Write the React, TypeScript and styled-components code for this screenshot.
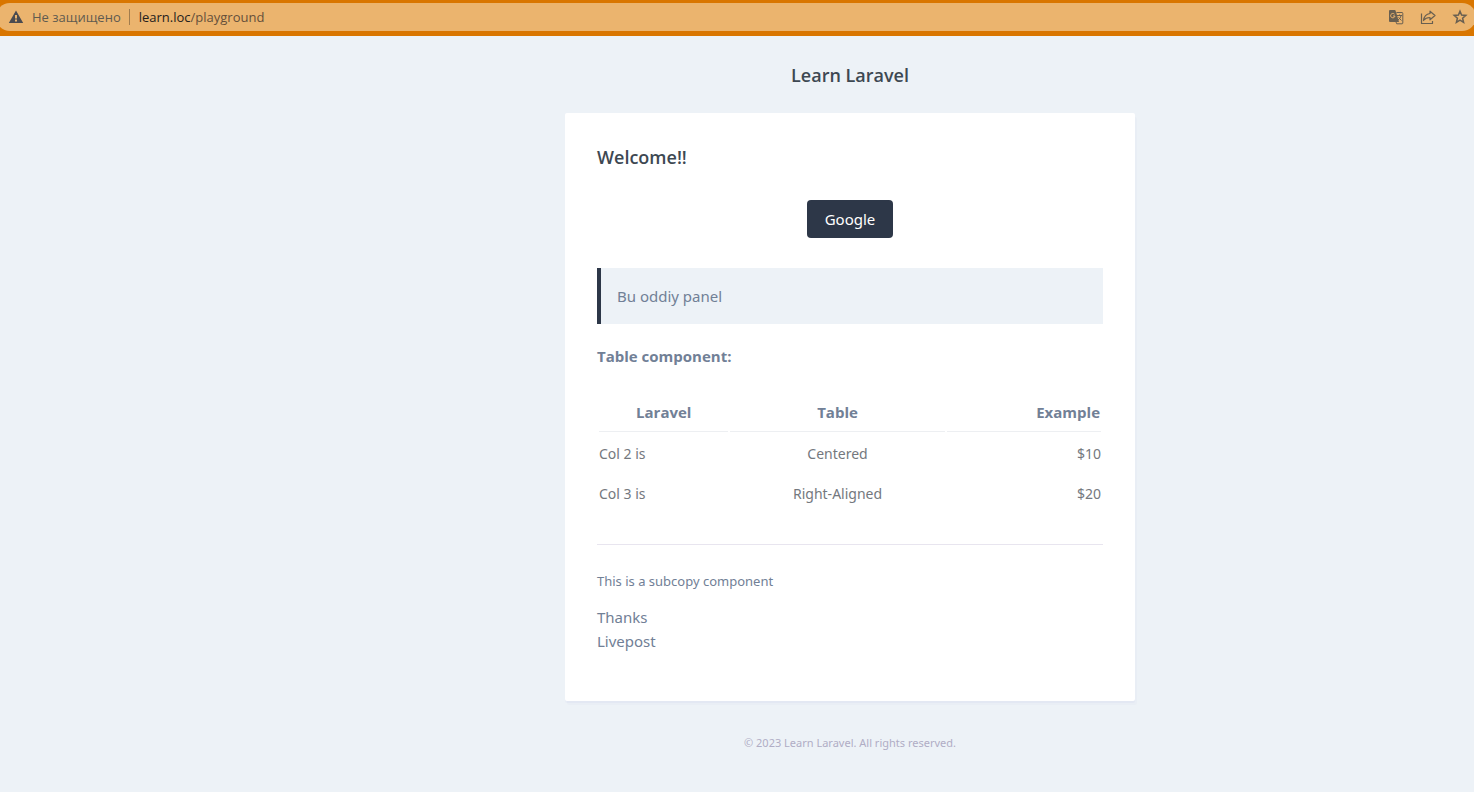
import React from "react";
import styled, { createGlobalStyle } from "styled-components";

const GlobalStyle = createGlobalStyle`
  * { box-sizing: border-box; }
  body {
    margin: 0;
    background: #edf2f7;
    color: #718096;
    font-family: "Noto Sans", "Open Sans", sans-serif;
    font-size: 15px;
    line-height: 24px;
  }
`;

const BrowserBar = styled.header`
  height: 36px;
  padding: 3px 0 5px;
  background: #d97600;
`;

const AddressBar = styled.div`
  display: flex;
  align-items: center;
  justify-content: space-between;
  height: 28px;
  margin: 0 -2px 0 -4px;
  padding: 0 8px 0 12px;
  border-radius: 14px;
  background: #ebb46e;
`;

const BarShell = styled.div`
  overflow: hidden;
`;

const AddressGroup = styled.div`
  display: flex;
  align-items: center;
  font-family: "Open Sans", "Noto Sans", sans-serif;
  font-size: 13px;
  line-height: 20px;
`;

const SecurityButton = styled.button`
  display: flex;
  align-items: center;
  gap: 8px;
  padding: 0;
  border: 0;
  background: none;
  color: #5f5b50;
  font: inherit;
`;

const Divider = styled.span`
  width: 1px;
  height: 16px;
  margin: 0 9px 0 8px;
  background: #a17c4d;
`;

const Address = styled.a`
  color: #654f3a;
  text-decoration: none;
`;

const Host = styled.span`
  color: #24201c;
`;

const Tools = styled.div`
  display: flex;
  gap: 16px;
`;

const ToolButton = styled.button`
  display: flex;
  padding: 0;
  border: 0;
  background: none;
  color: #695f50;
`;

const Mail = styled.div`
  display: flex;
  flex-direction: column;
  align-items: center;
  padding-left: 226px;
`;

const MailTitle = styled.a`
  padding: 27px 0 26px;
  color: #3d4852;
  font-family: "Open Sans", "Noto Sans", sans-serif;
  font-size: 18px;
  font-weight: 600;
  text-decoration: none;
`;

const Card = styled.main`
  width: 100%;
  max-width: 570px;
  padding: 32px;
  border-radius: 2px;
  background: #fff;
  box-shadow: 0 2px 0 rgba(0, 0, 150, 0.025), 2px 4px 0 rgba(0, 0, 150, 0.015);
`;

const Heading = styled.h1`
  margin: 0;
  color: #3d4852;
  font-family: "Open Sans", "Noto Sans", sans-serif;
  font-size: 18px;
  font-weight: 600;
  line-height: 24px;
`;

const Action = styled.div`
  display: flex;
  justify-content: center;
  margin: 31px 0 30px;
`;

const ActionLink = styled.a`
  padding: 7px 18px;
  border-radius: 4px;
  background: #2d3748;
  color: #fff;
  text-decoration: none;
`;

const Panel = styled.div`
  padding: 16px;
  border-left: 4px solid #2d3748;
  background: #edf2f7;
`;

const TableHeading = styled.h2`
  margin: 20px 0 28px;
  font-family: "Open Sans", "Noto Sans", sans-serif;
  font-size: 15px;
  line-height: 24px;
`;

const DataTable = styled.table`
  width: 100%;
  table-layout: fixed;
  border-spacing: 2px;
`;

type CellProps = { $align: "left" | "center" | "right"; $width?: string };

const HeadCell = styled.th<CellProps>`
  width: ${(p) => p.$width};
  padding: 2px 1px 7px;
  border-bottom: 1px solid #edeff2;
  font-family: "Open Sans", "Noto Sans", sans-serif;
  text-align: ${(p) => p.$align};
`;

const Cell = styled.td<CellProps>`
  padding: 11px 0 9px;
  color: #74787e;
  font-size: 14px;
  line-height: 18px;
  text-align: ${(p) => p.$align};
`;

const Subcopy = styled.p`
  margin: 30px 0 13px;
  padding-top: 26px;
  border-top: 1px solid #e8e5ef;
  font-size: 13px;
  line-height: 21px;
`;

const SignOff = styled.p`
  margin: 0 0 16px;
`;

const Footer = styled.footer`
  padding: 33px 32px 32px;
  color: #b0adc5;
  font-size: 11px;
  line-height: 18px;
`;

const rows = [
  ["Col 2 is", "Centered", "$10"],
  ["Col 3 is", "Right-Aligned", "$20"],
];

function WarningIcon() {
  return (
    <svg width="16" height="16" viewBox="0 0 16 16" aria-hidden="true">
      <path fill="#4a4b50" fillRule="evenodd" d="M8 1.500 15.200 14H.8ZM7 6v3.500h2V6ZM7 10.500v2h2v-2Z" />
    </svg>
  );
}

function TranslateIcon() {
  return (
    <svg width="16" height="16" viewBox="0 0 16 16" fill="none" stroke="currentColor" aria-hidden="true">
      <path fill="currentColor" stroke="none" d="M2 1h5.200l1 2.500L11 13H2a1 1 0 0 1-1-1V2a1 1 0 0 1 1-1Z" />
      <path stroke="#ebb46e" d="M6.500 5.200A2.200 2.200 0 1 0 7 7H5" />
      <path d="M8.500 3.500H14a.8.8 0 0 1 .8.8V14a.8.8 0 0 1-.8.8H8.700L8 13M9 6.500h5M11.500 5.500v1M13 6.500c-.3 2-1.500 3.500-3 4.500M10.500 8.500l3 3" />
    </svg>
  );
}

function ShareIcon() {
  return (
    <svg width="16" height="16" viewBox="0 0 16 16" fill="none" stroke="currentColor" strokeWidth="1.200" strokeLinejoin="round" aria-hidden="true">
      <path d="M1.500 4.500v10h11V12" />
      <path d="M10 2.200l5 4.300-5 4.300V8.500C7 8.500 5 9.500 3.500 11.500 4 7.500 6 5 10 4.500Z" />
    </svg>
  );
}

function StarIcon() {
  return (
    <svg width="16" height="16" viewBox="0 0 16 16" fill="none" stroke="currentColor" strokeWidth="1.500" aria-hidden="true">
      <path d="m8 2.200 1.600 3.900 4.200.3-3.200 2.800 1 4.200L8 11.200l-3.600 2.200 1-4.200-3.200-2.800 4.200-.3Z" />
    </svg>
  );
}

export default function App() {
  return (
    <>
      <GlobalStyle />
      <BarShell>
        <BrowserBar>
          <AddressBar>
            <AddressGroup>
              <SecurityButton type="button">
                <WarningIcon />
                Не защищено
              </SecurityButton>
              <Divider />
              <Address href="#playground">
                <Host>learn.loc</Host>/playground
              </Address>
            </AddressGroup>
            <Tools>
              <ToolButton type="button" aria-label="Translate"><TranslateIcon /></ToolButton>
              <ToolButton type="button" aria-label="Share"><ShareIcon /></ToolButton>
              <ToolButton type="button" aria-label="Bookmark"><StarIcon /></ToolButton>
            </Tools>
          </AddressBar>
        </BrowserBar>
      </BarShell>
      <Mail>
        <MailTitle href="#home">Learn Laravel</MailTitle>
        <Card>
          <Heading>Welcome!!</Heading>
          <Action>
            <ActionLink href="#google">Google</ActionLink>
          </Action>
          <Panel>Bu oddiy panel</Panel>
          <TableHeading>Table component:</TableHeading>
          <DataTable>
            <thead>
              <tr>
                <HeadCell $align="center" $width="26%">Laravel</HeadCell>
                <HeadCell $align="center" $width="43%">Table</HeadCell>
                <HeadCell $align="right" $width="31%">Example</HeadCell>
              </tr>
            </thead>
            <tbody>
              {rows.map(([name, kind, price]) => (
                <tr key={name}>
                  <Cell $align="left">{name}</Cell>
                  <Cell $align="center">{kind}</Cell>
                  <Cell $align="right">{price}</Cell>
                </tr>
              ))}
            </tbody>
          </DataTable>
          <Subcopy>This is a subcopy component</Subcopy>
          <SignOff>
            Thanks
            <br />
            Livepost
          </SignOff>
        </Card>
        <Footer>© 2023 Learn Laravel. All rights reserved.</Footer>
      </Mail>
    </>
  );
}
